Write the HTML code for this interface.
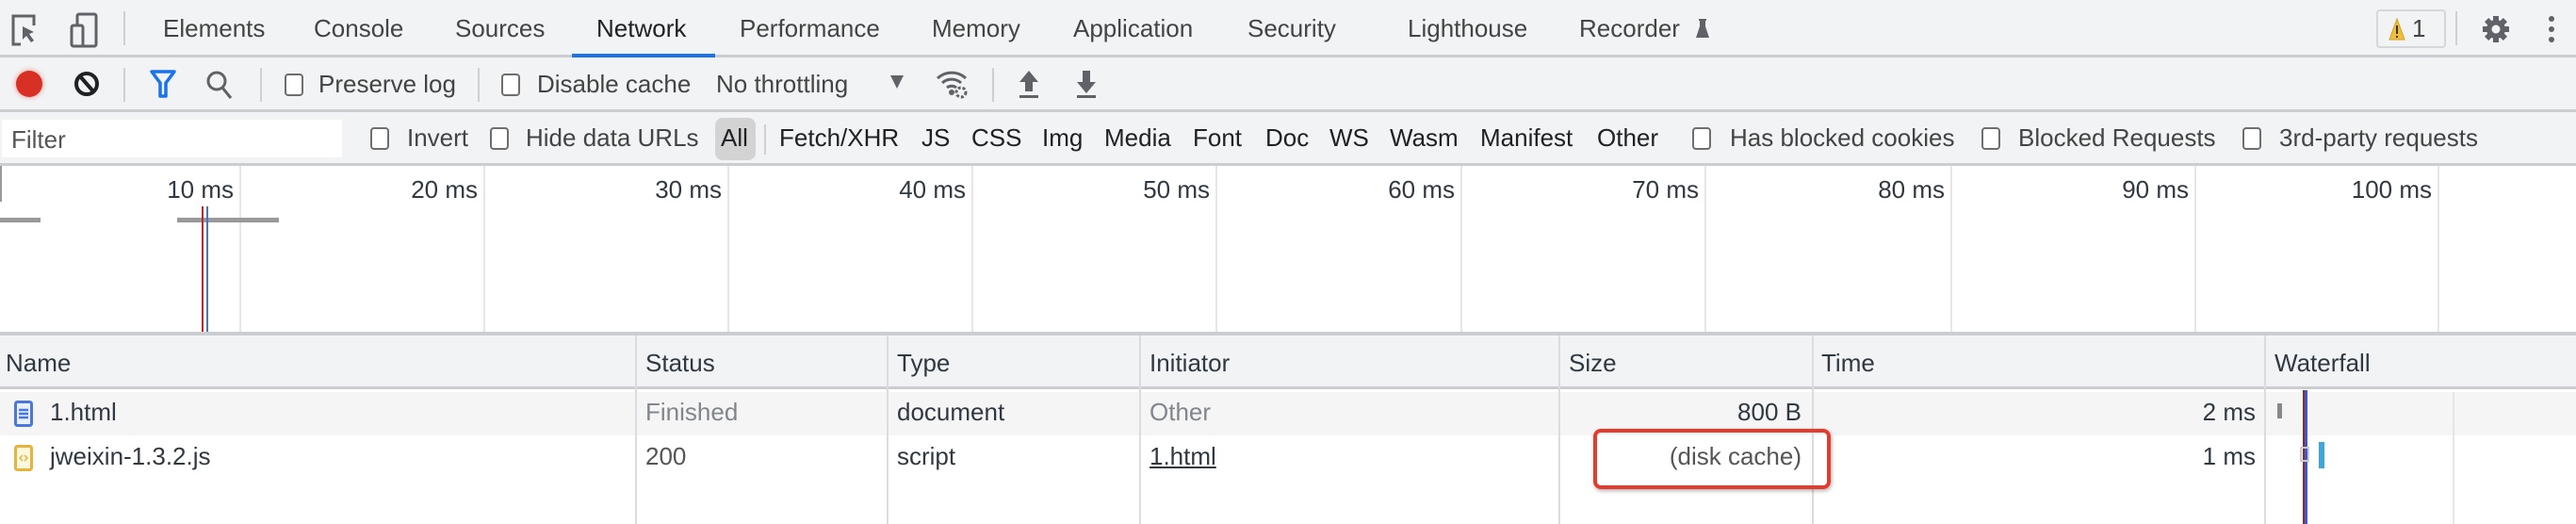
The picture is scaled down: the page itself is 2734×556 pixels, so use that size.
<!DOCTYPE html>
<html><head><meta charset="utf-8"><style>
*{margin:0;padding:0;box-sizing:border-box}
body{width:2734px;height:556px;overflow:hidden;background:#fff;font-family:"Liberation Sans",Arial,sans-serif;font-size:26px;color:#303942;position:relative}
.a{position:absolute;white-space:nowrap}
.bar{position:absolute;left:0;width:2734px;background:#f1f3f4}
.cb{position:absolute;width:20px;height:24px;border:2px solid #6e6e6e;border-radius:4px;background:#fff}
.sep{position:absolute;width:2px;background:#d0d0d0}
.vl{position:absolute;width:2px;background:#e6e6e6}
.t{color:#444}
.lb{position:absolute;top:186px;width:150px;text-align:right;white-space:nowrap}
</style></head><body>
<!-- tab bar -->
<div class="bar" style="top:0;height:61px;border-bottom:3px solid #cbcdd1"></div>
<svg class="a" style="left:10px;top:14px" width="30" height="36" viewBox="0 0 30 36"><path d="M12 33H4V3h22v10" fill="none" stroke="#5f6368" stroke-width="3"/><path d="M14 14l12 6-5 2 5 7-3 2-5-7-4 4z" fill="#5f6368"/></svg>
<svg class="a" style="left:74px;top:12px" width="30" height="40" viewBox="0 0 30 40"><rect x="8" y="3" width="20" height="34" rx="2" fill="none" stroke="#5f6368" stroke-width="3"/><rect x="2" y="15" width="12" height="22" rx="2" fill="#f1f3f4" stroke="#5f6368" stroke-width="3"/></svg>
<div class="sep" style="left:131px;top:12px;height:36px"></div>
<div class="a t" style="left:173px;top:15px">Elements</div>
<div class="a t" style="left:333px;top:15px">Console</div>
<div class="a t" style="left:483px;top:15px">Sources</div>
<div class="a" style="left:633px;top:15px;color:#202124">Network</div>
<div class="a" style="left:607px;top:57px;width:152px;height:4px;background:#1a73e8"></div>
<div class="a t" style="left:785px;top:15px">Performance</div>
<div class="a t" style="left:989px;top:15px">Memory</div>
<div class="a t" style="left:1139px;top:15px">Application</div>
<div class="a t" style="left:1324px;top:15px">Security</div>
<div class="a t" style="left:1494px;top:15px">Lighthouse</div>
<div class="a t" style="left:1676px;top:15px">Recorder</div>
<svg class="a" style="left:1800px;top:19px" width="14" height="22" viewBox="0 0 14 22"><path d="M3 1h8v2h-1v6l4 12H0L4 9V3H3z" fill="#5f6368"/></svg>
<div class="a" style="left:2522px;top:10px;width:74px;height:41px;border:2px solid #d5d7da;border-radius:4px"></div>
<svg class="a" style="left:2535px;top:19px" width="18" height="24" viewBox="0 0 18 24"><path d="M9 1L17 23H1z" fill="#f2c037" stroke="#c9a227"/><rect x="8" y="8" width="2" height="9" fill="#333"/><rect x="8" y="19" width="2" height="2" fill="#333"/></svg>
<div class="a t" style="left:2560px;top:15px">1</div>
<div class="sep" style="left:2606px;top:12px;height:36px"></div>
<svg class="a" style="left:2634px;top:16px" width="30" height="30" viewBox="0 0 30 30"><g fill="#5f6368"><circle cx="15" cy="15" r="10"/><rect x="12" y="1" width="6" height="28"/><rect x="1" y="12" width="28" height="6"/><rect x="12" y="1" width="6" height="28" transform="rotate(45 15 15)"/><rect x="12" y="1" width="6" height="28" transform="rotate(-45 15 15)"/></g><circle cx="15" cy="15" r="4.5" fill="#f1f3f4"/></svg>
<svg class="a" style="left:2703px;top:16px" width="10" height="30" viewBox="0 0 10 30"><g fill="#5f6368"><circle cx="5" cy="4" r="3"/><circle cx="5" cy="15" r="3"/><circle cx="5" cy="26" r="3"/></g></svg>
<!-- toolbar -->
<div class="bar" style="top:61px;height:58px;border-bottom:3px solid #cbcdd1"></div>
<div class="a" style="left:17px;top:75px;width:28px;height:28px;border-radius:50%;background:#d93025;box-shadow:0 0 6px #f28b82"></div>
<svg class="a" style="left:78px;top:75px" width="28" height="28" viewBox="0 0 28 28"><circle cx="14" cy="14" r="11" fill="none" stroke="#202124" stroke-width="4"/><path d="M7 6l14 16" stroke="#202124" stroke-width="4"/></svg>
<div class="sep" style="left:131px;top:72px;height:36px"></div>
<svg class="a" style="left:158px;top:73px" width="30" height="32" viewBox="0 0 30 32"><path d="M3 3h24L18 15v14h-6V15z" fill="none" stroke="#1a73e8" stroke-width="3.5" stroke-linejoin="round"/></svg>
<svg class="a" style="left:218px;top:74px" width="30" height="32" viewBox="0 0 30 32"><circle cx="12" cy="12" r="9" fill="none" stroke="#5f6368" stroke-width="3"/><path d="M18 19l9 11" stroke="#5f6368" stroke-width="3"/></svg>
<div class="sep" style="left:276px;top:72px;height:36px"></div>
<div class="cb" style="left:302px;top:78px"></div>
<div class="a t" style="left:338px;top:74px">Preserve log</div>
<div class="sep" style="left:507px;top:72px;height:36px"></div>
<div class="cb" style="left:532px;top:78px"></div>
<div class="a t" style="left:570px;top:74px">Disable cache</div>
<div class="a t" style="left:760px;top:74px">No throttling</div>
<div class="a" style="left:945px;top:80px;width:0;height:0;border-left:7px solid transparent;border-right:7px solid transparent;border-top:14px solid #5f6368"></div>
<svg class="a" style="left:993px;top:73px" width="36" height="32" viewBox="0 0 36 32"><path d="M2 10a22 22 0 0 1 30 0M7 15a15 15 0 0 1 20 0M12 20a8 8 0 0 1 10 0" fill="none" stroke="#5f6368" stroke-width="3"/><circle cx="17" cy="25" r="3" fill="#5f6368"/><circle cx="27" cy="25" r="5" fill="none" stroke="#5f6368" stroke-width="3" stroke-dasharray="3 2"/></svg>
<div class="sep" style="left:1053px;top:72px;height:36px"></div>
<svg class="a" style="left:1080px;top:73px" width="24" height="32" viewBox="0 0 24 32"><path d="M12 2L2 14h6v10h8V14h6z" fill="#5f6368"/><rect x="2" y="28" width="20" height="3" fill="#5f6368"/></svg>
<svg class="a" style="left:1141px;top:73px" width="24" height="32" viewBox="0 0 24 32"><path d="M12 26L2 14h6V2h8v12h6z" fill="#5f6368"/><rect x="2" y="28" width="20" height="3" fill="#5f6368"/></svg>
<!-- filter bar -->
<div class="bar" style="top:119px;height:57px;border-bottom:3px solid #cbcdd1"></div>
<div class="a" style="left:2px;top:127px;width:361px;height:40px;background:#fff"></div>
<div class="a t" style="left:12px;top:133px;color:#555">Filter</div>
<div class="cb" style="left:393px;top:135px"></div><div class="a t" style="left:432px;top:131px">Invert</div>
<div class="cb" style="left:520px;top:135px"></div><div class="a t" style="left:558px;top:131px">Hide data URLs</div>
<div class="a" style="left:759px;top:125px;width:43px;height:45px;background:#d3d3d3;border-radius:8px"></div>
<div class="a" style="left:765px;top:131px;color:#202124">All</div>
<div class="sep" style="left:811px;top:132px;height:32px"></div>
<div class="a" style="left:827px;top:131px;color:#202124">Fetch/XHR</div>
<div class="a" style="left:978px;top:131px;color:#202124">JS</div>
<div class="a" style="left:1031px;top:131px;color:#202124">CSS</div>
<div class="a" style="left:1106px;top:131px;color:#202124">Img</div>
<div class="a" style="left:1172px;top:131px;color:#202124">Media</div>
<div class="a" style="left:1266px;top:131px;color:#202124">Font</div>
<div class="a" style="left:1343px;top:131px;color:#202124">Doc</div>
<div class="a" style="left:1411px;top:131px;color:#202124">WS</div>
<div class="a" style="left:1475px;top:131px;color:#202124">Wasm</div>
<div class="a" style="left:1571px;top:131px;color:#202124">Manifest</div>
<div class="a" style="left:1695px;top:131px;color:#202124">Other</div>
<div class="cb" style="left:1796px;top:135px"></div><div class="a t" style="left:1836px;top:131px">Has blocked cookies</div>
<div class="cb" style="left:2103px;top:135px"></div><div class="a t" style="left:2142px;top:131px">Blocked Requests</div>
<div class="cb" style="left:2380px;top:135px"></div><div class="a t" style="left:2419px;top:131px">3rd-party requests</div>
<!-- overview -->
<div class="a" style="left:0;top:176px;width:2px;height:38px;background:#999"></div>
<div class="vl" style="left:254px;top:176px;height:176px"></div>
<div class="vl" style="left:513px;top:176px;height:176px"></div>
<div class="vl" style="left:772px;top:176px;height:176px"></div>
<div class="vl" style="left:1031px;top:176px;height:176px"></div>
<div class="vl" style="left:1290px;top:176px;height:176px"></div>
<div class="vl" style="left:1550px;top:176px;height:176px"></div>
<div class="vl" style="left:1809px;top:176px;height:176px"></div>
<div class="vl" style="left:2070px;top:176px;height:176px"></div>
<div class="vl" style="left:2329px;top:176px;height:176px"></div>
<div class="vl" style="left:2587px;top:176px;height:176px"></div>
<div class="lb" style="left:98px">10 ms</div>
<div class="lb" style="left:357px">20 ms</div>
<div class="lb" style="left:616px">30 ms</div>
<div class="lb" style="left:875px">40 ms</div>
<div class="lb" style="left:1134px">50 ms</div>
<div class="lb" style="left:1394px">60 ms</div>
<div class="lb" style="left:1653px">70 ms</div>
<div class="lb" style="left:1914px">80 ms</div>
<div class="lb" style="left:2173px">90 ms</div>
<div class="lb" style="left:2431px">100 ms</div>
<div class="a" style="left:0;top:231px;width:43px;height:5px;background:#999"></div>
<div class="a" style="left:188px;top:231px;width:108px;height:5px;background:#999"></div>
<div class="a" style="left:214px;top:219px;width:2px;height:135px;background:#b03030"></div>
<div class="a" style="left:219px;top:219px;width:2px;height:135px;background:#4a6fd8"></div>
<!-- table -->
<div class="bar" style="top:352px;height:61px;border-top:4px solid #cbcdd1;border-bottom:3px solid #cbcdd1"></div>
<div class="a" style="left:0;top:416px;width:2734px;height:46px;background:#f5f5f5"></div>
<div class="vl" style="left:674px;top:356px;height:200px;background:#dadce0"></div>
<div class="vl" style="left:941px;top:356px;height:200px;background:#dadce0"></div>
<div class="vl" style="left:1209px;top:356px;height:200px;background:#dadce0"></div>
<div class="vl" style="left:1654px;top:356px;height:200px;background:#dadce0"></div>
<div class="vl" style="left:1923px;top:356px;height:200px;background:#dadce0"></div>
<div class="vl" style="left:2403px;top:356px;height:200px;background:#dadce0"></div>
<div class="vl" style="left:2603px;top:416px;height:140px"></div>
<div class="a" style="left:6px;top:370px">Name</div>
<div class="a" style="left:685px;top:370px">Status</div>
<div class="a" style="left:952px;top:370px">Type</div>
<div class="a" style="left:1220px;top:370px">Initiator</div>
<div class="a" style="left:1665px;top:370px">Size</div>
<div class="a" style="left:1933px;top:370px">Time</div>
<div class="a" style="left:2414px;top:370px">Waterfall</div>
<svg class="a" style="left:15px;top:425px" width="20" height="28" viewBox="0 0 20 28"><rect x="1.5" y="1.5" width="17" height="25" rx="2" fill="#e8f0fe" stroke="#4a78d8" stroke-width="3"/><path d="M5 10h10M5 14h10M5 18h10" stroke="#4a78d8" stroke-width="2.5"/></svg>
<div class="a" style="left:53px;top:422px">1.html</div>
<div class="a" style="left:685px;top:422px;color:#80868b">Finished</div>
<div class="a" style="left:952px;top:422px">document</div>
<div class="a" style="left:1220px;top:422px;color:#80868b">Other</div>
<div class="a" style="left:1760px;top:422px;width:152px;text-align:right">800 B</div>
<div class="a" style="left:2240px;top:422px;width:154px;text-align:right">2 ms</div>
<svg class="a" style="left:15px;top:472px" width="20" height="28" viewBox="0 0 20 28"><rect x="1.5" y="1.5" width="17" height="25" rx="2" fill="#fef7e0" stroke="#e6b33b" stroke-width="3"/><path d="M9 11l-3 3 3 3M11 11l3 3-3 3" stroke="#e6b33b" stroke-width="1.5" fill="none"/></svg>
<div class="a" style="left:53px;top:469px">jweixin-1.3.2.js</div>
<div class="a" style="left:685px;top:469px;color:#555">200</div>
<div class="a" style="left:952px;top:469px">script</div>
<div class="a" style="left:1220px;top:469px;text-decoration:underline">1.html</div>
<div class="a" style="left:1712px;top:469px;width:200px;text-align:right;color:#555">(disk cache)</div>
<div class="a" style="left:2240px;top:469px;width:154px;text-align:right">1 ms</div>
<div class="a" style="left:1691px;top:455px;width:252px;height:64px;border:4px solid #e53a2e;border-radius:8px;box-shadow:1px 2px 4px rgba(0,0,0,.3)"></div>
<div class="a" style="left:2417px;top:428px;width:5px;height:16px;background:#888"></div>
<div class="a" style="left:2444px;top:414px;width:2px;height:142px;background:#8a2a2a"></div>
<div class="a" style="left:2446px;top:414px;width:3px;height:142px;background:#3a5ad0"></div>
<div class="a" style="left:2441px;top:474px;width:10px;height:16px;border:2px solid #ccc"></div>
<div class="a" style="left:2461px;top:469px;width:6px;height:28px;background:#3ba6e0"></div>
</body></html>
